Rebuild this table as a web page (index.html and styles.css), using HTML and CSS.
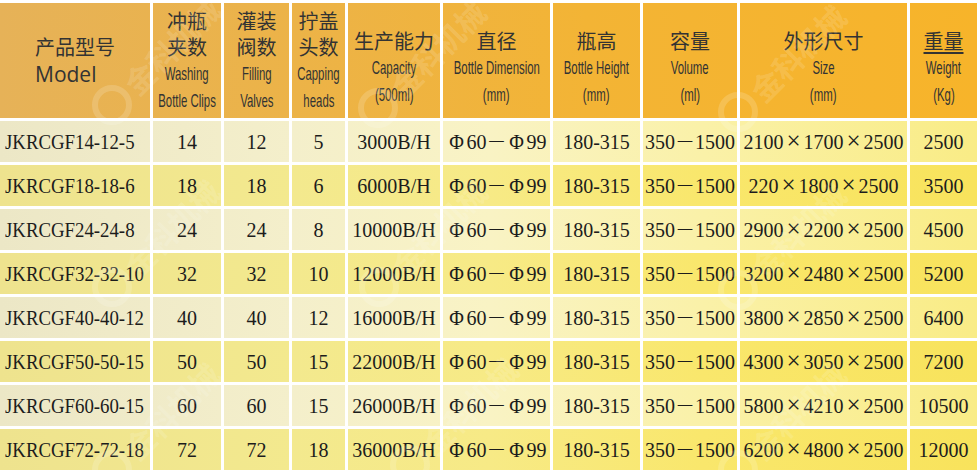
FILE: index.html
```html
<!DOCTYPE html>
<html lang="zh-CN">
<head>
<meta charset="utf-8">
<title>产品参数</title>
<link rel="stylesheet" href="styles.css">
</head>
<body>
<div class="wrap">
  <table class="spec">
    <colgroup>
      <col class="c-model"><col class="c-wash"><col class="c-fill"><col class="c-cap">
      <col class="c-prod"><col class="c-dia"><col class="c-height"><col class="c-vol">
      <col class="c-size"><col class="c-weight">
    </colgroup>
    <thead>
      <tr>
        <th class="h-model"><div class="zh">产品型号</div><div class="model-en">Model</div></th>
        <th><div class="zh">冲瓶</div><div class="zh">夹数</div><div class="en"><span>Washing</span></div><div class="en"><span>Bottle Clips</span></div></th>
        <th><div class="zh">灌装</div><div class="zh">阀数</div><div class="en"><span>Filling</span></div><div class="en"><span>Valves</span></div></th>
        <th><div class="zh">拧盖</div><div class="zh">头数</div><div class="en"><span>Capping</span></div><div class="en"><span>heads</span></div></th>
        <th class="h3"><div class="zh">生产能力</div><div class="en"><span>Capacity</span></div><div class="en"><span>(500ml)</span></div></th>
        <th class="h3"><div class="zh">直径</div><div class="en"><span>Bottle Dimension</span></div><div class="en"><span>(mm)</span></div></th>
        <th class="h3"><div class="zh">瓶高</div><div class="en"><span>Bottle Height</span></div><div class="en"><span>(mm)</span></div></th>
        <th class="h3"><div class="zh">容量</div><div class="en"><span>Volume</span></div><div class="en"><span>(ml)</span></div></th>
        <th class="h3"><div class="zh">外形尺寸</div><div class="en"><span>Size</span></div><div class="en"><span>(mm)</span></div></th>
        <th class="h3"><div class="zh"><span class="ul">重量</span></div><div class="en"><span>Weight</span></div><div class="en"><span>(Kg)</span></div></th>
      </tr>
    </thead>
    <tbody>
      <tr class="odd">
        <td class="model"><span class="mt">JKRCGF14-12-5</span></td><td>14</td><td>12</td><td>5</td><td>3000B/H</td>
        <td><span class="fw">Φ</span>60<span class="fw dash">－</span><span class="fw">Φ</span>99</td><td>180-315</td><td>350<span class="fw dash">－</span>1500</td>
        <td>2100<span class="fw x">×</span>1700<span class="fw x">×</span>2500</td><td>2500</td>
      </tr>
      <tr class="even">
        <td class="model"><span class="mt">JKRCGF18-18-6</span></td><td>18</td><td>18</td><td>6</td><td>6000B/H</td>
        <td><span class="fw">Φ</span>60<span class="fw dash">－</span><span class="fw">Φ</span>99</td><td>180-315</td><td>350<span class="fw dash">－</span>1500</td>
        <td>220<span class="fw x">×</span>1800<span class="fw x">×</span>2500</td><td>3500</td>
      </tr>
      <tr class="odd">
        <td class="model"><span class="mt">JKRCGF24-24-8</span></td><td>24</td><td>24</td><td>8</td><td>10000B/H</td>
        <td><span class="fw">Φ</span>60<span class="fw dash">－</span><span class="fw">Φ</span>99</td><td>180-315</td><td>350<span class="fw dash">－</span>1500</td>
        <td>2900<span class="fw x">×</span>2200<span class="fw x">×</span>2500</td><td>4500</td>
      </tr>
      <tr class="even">
        <td class="model"><span class="mt">JKRCGF32-32-10</span></td><td>32</td><td>32</td><td>10</td><td>12000B/H</td>
        <td><span class="fw">Φ</span>60<span class="fw dash">－</span><span class="fw">Φ</span>99</td><td>180-315</td><td>350<span class="fw dash">－</span>1500</td>
        <td>3200<span class="fw x">×</span>2480<span class="fw x">×</span>2500</td><td>5200</td>
      </tr>
      <tr class="odd">
        <td class="model"><span class="mt">JKRCGF40-40-12</span></td><td>40</td><td>40</td><td>12</td><td>16000B/H</td>
        <td><span class="fw">Φ</span>60<span class="fw dash">－</span><span class="fw">Φ</span>99</td><td>180-315</td><td>350<span class="fw dash">－</span>1500</td>
        <td>3800<span class="fw x">×</span>2850<span class="fw x">×</span>2500</td><td>6400</td>
      </tr>
      <tr class="even">
        <td class="model"><span class="mt">JKRCGF50-50-15</span></td><td>50</td><td>50</td><td>15</td><td>22000B/H</td>
        <td><span class="fw">Φ</span>60<span class="fw dash">－</span><span class="fw">Φ</span>99</td><td>180-315</td><td>350<span class="fw dash">－</span>1500</td>
        <td>4300<span class="fw x">×</span>3050<span class="fw x">×</span>2500</td><td>7200</td>
      </tr>
      <tr class="odd">
        <td class="model"><span class="mt">JKRCGF60-60-15</span></td><td>60</td><td>60</td><td>15</td><td>26000B/H</td>
        <td><span class="fw">Φ</span>60<span class="fw dash">－</span><span class="fw">Φ</span>99</td><td>180-315</td><td>350<span class="fw dash">－</span>1500</td>
        <td>5800<span class="fw x">×</span>4210<span class="fw x">×</span>2500</td><td>10500</td>
      </tr>
      <tr class="even">
        <td class="model"><span class="mt">JKRCGF72-72-18</span></td><td>72</td><td>72</td><td>18</td><td>36000B/H</td>
        <td><span class="fw">Φ</span>60<span class="fw dash">－</span><span class="fw">Φ</span>99</td><td>180-315</td><td>350<span class="fw dash">－</span>1500</td>
        <td>6200<span class="fw x">×</span>4800<span class="fw x">×</span>2500</td><td>12000</td>
      </tr>
    </tbody>
  </table>

  <div class="watermarks" aria-hidden="true">
    <div class="wm wm-a1"><span class="wm-logo"></span><span class="wm-text">金科机械</span></div>
    <div class="wm wm-a2"><span class="wm-logo"></span><span class="wm-text">金科机械</span></div>
    <div class="wm wm-a3"><span class="wm-logo"></span><span class="wm-text">金科机械</span></div>
    <div class="wm wm-b1"><span class="wm-logo"></span><span class="wm-text">金科机械</span></div>
    <div class="wm wm-b2"><span class="wm-logo"></span><span class="wm-text">金科机械</span></div>
    <div class="wm wm-b3"><span class="wm-logo"></span><span class="wm-text">金科机械</span></div>
    <div class="wm wm-c1"><span class="wm-logo"></span><span class="wm-text">金科机械</span></div>
    <div class="wm wm-c2"><span class="wm-logo"></span><span class="wm-text">金科机械</span></div>
    <div class="wm wm-c3"><span class="wm-logo"></span><span class="wm-text">金科机械</span></div>
  </div>
</div>
</body>
</html>
```

FILE: styles.css
```css
html, body {
  margin: 0;
  padding: 0;
  background: #ffffff;
}

body {
  font-family: "Liberation Serif", "Noto Sans CJK SC", serif;
  color: #1c1c1c;
}

.wrap {
  position: relative;
  width: 978px;
  height: 471px;
  overflow: hidden;
  background: #ffffff;
}

.spec {
  border-collapse: separate;
  border-spacing: 3px;
  table-layout: fixed;
  width: 983px;
  margin-left: -3px;
}

.c-model  { width: 150px; }
.c-wash   { width: 68px; }
.c-fill   { width: 65px; }
.c-cap    { width: 53px; }
.c-prod   { width: 92px; }
.c-dia    { width: 107px; }
.c-height { width: 87px; }
.c-vol    { width: 94px; }
.c-size   { width: 167px; }
.c-weight { width: 67px; }

/* ---------- header ---------- */
thead tr {
  height: 115px;
  background: linear-gradient(90deg, #e6b258 0%, #ecb348 30%, #f3b435 60%, #f7b42a 100%);
}

th {
  padding: 0;
  vertical-align: middle;
  text-align: center;
  font-weight: normal;
  color: #333333;
  white-space: nowrap;
}

th.h3 {
  padding-top: 14px;
}

.zh {
  font-family: "Noto Sans CJK SC", sans-serif;
  font-size: 20px;
  line-height: 26px;
  font-weight: 400;
}

th.h3 .zh {
  line-height: 27px;
}

.ul {
  text-decoration: underline;
  text-underline-offset: 3px;
}

.h-model {
  text-align: left;
  padding-left: 35px;
}

.model-en {
  font-family: "Open Sans", "Noto Sans", sans-serif;
  font-size: 21px;
  line-height: 28px;
}

.en {
  display: flex;
  justify-content: center;
  height: 27px;
  line-height: 27px;
}

.en span {
  flex: none;
  display: inline-block;
  font-family: "Liberation Sans", sans-serif;
  font-size: 19px;
  line-height: 27px;
  transform: scaleX(0.6);
  white-space: nowrap;
}

/* ---------- body ---------- */
tbody tr {
  height: 41px;
}

tbody tr.odd {
  background: linear-gradient(90deg, #ece7c6 0%, #f4efcb 30%, #f9f3c4 50%, #faf1a8 72%, #f9ec86 100%);
}

tbody tr.even {
  background: linear-gradient(90deg, #eee38e 0%, #f3e98e 30%, #f7ea86 50%, #f9e76c 72%, #f8e35c 100%);
}

td {
  padding: 0;
  text-align: center;
  vertical-align: middle;
  font-size: 20px;
  line-height: 24px;
  white-space: nowrap;
  color: #1c1c1c;
}

td.model {
  text-align: left;
  padding-left: 5px;
}

.mt {
  display: inline-block;
  transform: scaleX(0.94);
  transform-origin: left center;
}

.fw {
  display: inline-block;
  width: 20px;
  text-align: center;
  line-height: 24px;
}

.dash {
  font-family: "Noto Sans CJK SC", sans-serif;
  font-weight: 300;
}

.x {
  font-size: 25px;
}

/* ---------- watermark overlay ---------- */
.watermarks {
  position: absolute;
  inset: 0;
  pointer-events: none;
}

.wm {
  position: absolute;
  display: flex;
  align-items: center;
  gap: 4px;
  transform: rotate(-45deg);
  transform-origin: 20px 50%;
  white-space: nowrap;
}

.wm-logo {
  display: inline-block;
  width: 40px;
  height: 40px;
  border-radius: 50%;
  border: 6px solid rgba(255, 255, 255, 0.16);
  box-sizing: border-box;
}

.wm-text {
  font-family: "Noto Sans CJK SC", sans-serif;
  font-weight: 700;
  font-size: 30px;
  line-height: 40px;
  color: rgba(255, 255, 255, 0.15);
}

.wm-a1 { left: 92px;  top: 85px; }
.wm-a2 { left: 358px; top: 88px; }
.wm-a3 { left: 718px; top: 92px; }
.wm-b1 { left: 92px;  top: 267px; }
.wm-b2 { left: 359px; top: 267px; }
.wm-b3 { left: 718px; top: 270px; }
.wm-c1 { left: 92px;  top: 450px; }
.wm-c2 { left: 390px; top: 445px; }
.wm-c3 { left: 718px; top: 450px; }
```
